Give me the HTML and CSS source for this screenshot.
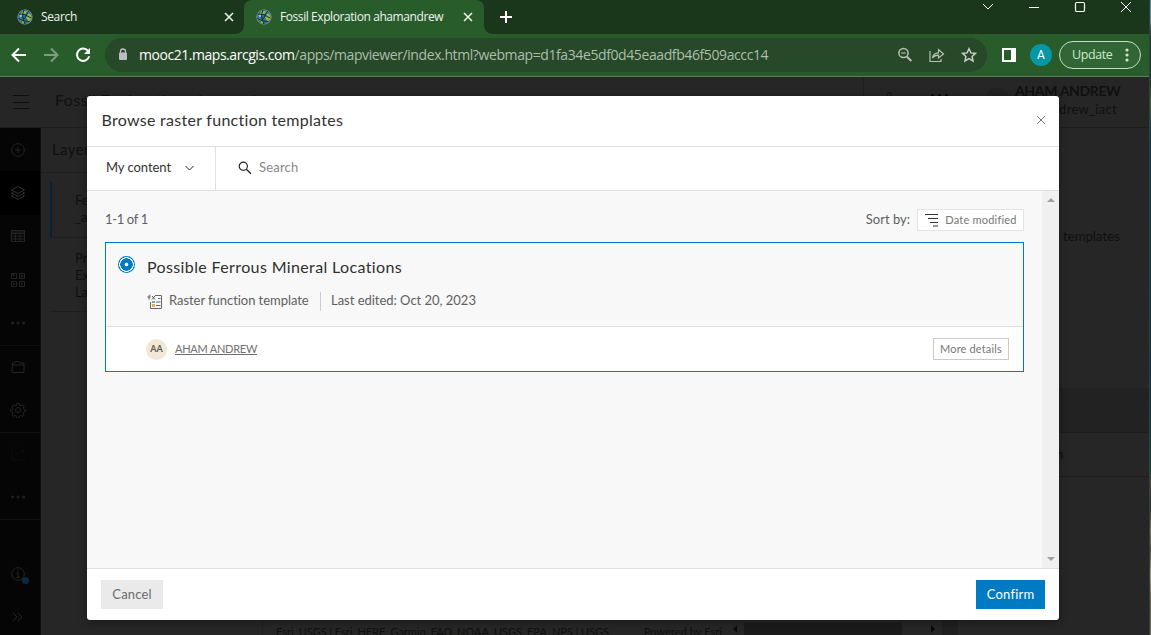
FILE: index.html
```html
<!DOCTYPE html>
<html lang="en">
<head>
<meta charset="utf-8">
<title>Fossil Exploration ahamandrew</title>
<link rel="stylesheet" href="styles.css">
</head>
<body>
<svg class="defs" width="0" height="0">
  <symbol id="globe" viewBox="0 0 16 16">
    <circle cx="8" cy="8" r="7.600" fill="#8f9a92"/>
    <circle cx="8" cy="8" r="6.900" fill="#2a6f9f"/>
    <path d="M5 2.500l3-1 1.500 1.500-1 2L6 6.500 3 6.500zM10.500 4.500l2.500 0 1.500 3-.5 3-2.500 2.500-1.500-2.500-1-2zM3 9.500l3 .5 2 2-1 2.500-3-1.500z" fill="#93b640"/>
    <path d="M2.500 6l2-1.500.5 3-2 1zM9 2l2.500 1-1 1.200z" fill="#8cc4e4"/>
    <path d="M1.500 5q6-1 12.500 4M1.500 9.500q5 3 11 3M7 1q-3 6 1 14M11.500 2q-2 7-8 11" fill="none" stroke="#10232c" stroke-width=".9"/>
  </symbol>
  <symbol id="close" viewBox="0 0 10 10"><path d="M1 1l8 8M9 1L1 9" fill="none" stroke="currentColor"/></symbol>
</svg>
<div class="screen">
  <div class="window">
    <div class="tabs">
      <div class="tab first"><svg class="fav"><use href="#globe"/></svg><span class="t-search">Search</span><svg class="tabclose"><use href="#close"/></svg></div>
      <div class="tab active"><svg class="fav"><use href="#globe"/></svg><span class="t-active">Fossil Exploration ahamandrew</span><svg class="tabclose"><use href="#close"/></svg></div>
      <svg class="plus" width="12" height="12"><path d="M6 0v12M0 6h12" stroke="#fff" stroke-width="2"/></svg>
      <div class="winctl">
        <svg width="12" height="8"><path d="M1 1l5 5 5-5" fill="none" stroke="#fff"/></svg>
        <svg width="12" height="12"><path d="M1 6.500h10" stroke="#fff"/></svg>
        <svg width="12" height="12"><rect x="1.500" y="1.500" width="9" height="9" rx="1.300" fill="none" stroke="#fff" stroke-width="1.200"/></svg>
        <svg width="12" height="12"><path d="M1 1l10 10M11 1L1 11" stroke="#fff"/></svg>
      </div>
    </div>
    <div class="toolbar">
      <svg class="nav" width="16" height="16"><path d="M15 8H2M8 1.500L1.500 8 8 14.500" fill="none" stroke="#fff" stroke-width="2"/></svg>
      <svg class="nav" width="16" height="16"><path d="M1 8h13M8 1.500L14.500 8 8 14.500" fill="none" stroke="#7f9c80" stroke-width="2"/></svg>
      <svg class="nav" width="16" height="16"><path d="M13.300 4.200A6.200 6.200 0 1 0 14.200 9.300" fill="none" stroke="#fff" stroke-width="2"/><path d="M15 1v6H9z" fill="#fff"/></svg>
      <div class="address">
        <svg width="10" height="13"><path d="M2.500 5V3.500a2.500 2.500 0 0 1 5 0V5" fill="none" stroke="#b9bfc0" stroke-width="1.300"/><rect x="1" y="4.500" width="8" height="7.500" rx="1" fill="#b9bfc0"/></svg>
        <span class="url"><b>mooc21.maps.arcgis.com</b>/apps/mapviewer/index.html?webmap=d1fa34e5df0d45eaadfb46f509accc14</span>
        <svg class="a1" width="16" height="16"><g fill="none" stroke="#b7c2b7"><circle cx="6.500" cy="6" r="4.600" stroke-width="1.500"/><path d="M10 9.700l4.300 4.300" stroke-width="2"/><path d="M4.300 6h4.400" stroke-width="1.200"/></g></svg>
        <svg class="a2" width="16" height="16"><path d="M1 4v10.500h11V12M3.500 11C4 7.500 6 6 9.500 5.800V2.500L14.500 7 9.500 11V8.200C6.800 8.200 5 9 3.500 11z" fill="none" stroke="#b7c2b7" stroke-width="1.200"/></svg>
        <svg class="a3" width="16" height="16"><path d="M8 1.700l1.900 4.200 4.600.5-3.400 3.100.9 4.500L8 11.700 4 14l.9-4.500L1.500 6.400l4.600-.5z" fill="none" stroke="#c5cec5" stroke-width="1.500"/></svg>
      </div>
      <svg class="side" width="14" height="14"><path fill="#fff" fill-rule="evenodd" d="M0 0h14v14H0zM2 2v10h7V2z"/></svg>
      <span class="profile">A</span>
      <div class="update"><span>Update</span><svg width="4" height="14"><g fill="#c8ecc9"><circle cx="2" cy="2" r="1.600"/><circle cx="2" cy="7" r="1.600"/><circle cx="2" cy="12" r="1.600"/></g></svg></div>
    </div>
    <div class="app">
      <header class="apphead">
        <svg class="burger" width="18" height="16"><path d="M1 1.500h16M1 8.500h16M1 14.500h16" stroke="#0d0d0d"/></svg>
        <span class="maptitle">Fossil Exploration ahamandrew</span>
        <div class="account">
          <svg class="bell" width="8" height="10"><path d="M2 4V2.500a2 2 0 0 1 4 0V4" fill="none" stroke="#111"/></svg>
          <i class="grid"></i>
          <i class="avatar"></i>
          <div class="names"><b>AHAM ANDREW</b><span>ahamandrew_iact</span></div>
        </div>
      </header>
      <div class="workspace">
        <nav class="rail">
          <a><svg><circle cx="8" cy="8" r="6.300"/><path d="M8 5v6M5 8h6"/></svg></a>
          <a class="on"><svg><path d="M1.500 5L8 1.500 14.500 5 8 8.500zM3 7.200L1.500 8 8 11.500 14.500 8 13 7.200M3 10l-1.500.9L8 14.500l6.500-3.600L13 10"/></svg></a>
          <a><svg><path d="M1.500 2.500h13v11h-13zM1.500 5.500h13M1.500 8.200h13M1.500 11h13M5.500 5.500v8M10 5.500v8M1.500 4h13"/></svg></a>
          <a><svg><path d="M1.500 1.500h5v5h-5zM9.500 1.500h5v5h-5zM1.500 9.500h5v5h-5zM9.500 9.500h5v5h-5zM3 1.500v2h2M11 6V3.500h2V5M3 11.500h2l-2 2M11 11.500h2M11 13h1"/></svg></a>
          <a class="dots"><svg><circle cx="2.500" cy="8" r="1"/><circle cx="8" cy="8" r="1"/><circle cx="13.500" cy="8" r="1"/></svg></a>
          <a class="rule"><svg><path d="M2.500 4h2l1-1.500h3L9 4h5v9.500H2zM2 6h12"/></svg></a>
          <a><svg><circle cx="8" cy="8" r="2.500"/><path d="M6.800 1.500h2.400l.4 1.900 1.300.5 1.700-1.100 1.600 1.700-1 1.600.5 1.200 1.800.4v2l-1.900.4-.5 1.100 1 1.700-1.600 1.500-1.600-1-1.300.5-.4 1.800H6.800l-.4-1.800-1.200-.5-1.700 1-1.600-1.600 1-1.600-.5-1.100L.6 9.600v-2l1.800-.4.5-1.200-1-1.600 1.600-1.600 1.700 1 1.200-.5z"/></svg></a>
          <a class="rule faint"><svg><path d="M9 2H2v12h12V9M7 10c0-4 2-5 6-5M11 2l3 3-3 3"/></svg></a>
          <a class="dots"><svg><circle cx="2.500" cy="8" r="1"/><circle cx="8" cy="8" r="1"/><circle cx="13.500" cy="8" r="1"/></svg></a>
          <div class="railfoot rule">
            <a class="info"><svg><circle cx="8" cy="8" r="6.300"/><path d="M6.500 7H8v4.500M6.500 11.500h3M8 4v1.500"/></svg></a>
            <a class="expand"><svg><path d="M3 4l4 4-4 4M8 4l4 4-4 4"/></svg></a>
          </div>
        </nav>
        <section class="layers">
          <h2>Layers</h2>
          <div class="layer sel">Fe<br>_a</div>
          <div class="layer second">Pro<br>Ex<br>La</div>
        </section>
        <main class="map">
          <span class="credit">Esri, USGS | Esri, HERE, Garmin, FAO, NOAA, USGS, EPA, NPS | USGS</span>
          <span class="powered">Powered by Esri</span>
          <div class="hscroll"><i class="left"></i><i class="thumb"></i><i class="right"></i></div>
        </main>
        <aside class="panel">
          <div class="ptop"><span>templates</span></div>
          <div class="pband"></div>
          <div class="prow">n</div>
        </aside>
      </div>
      <div class="modal">
        <header class="mhead"><h1><span>Browse raster function templates</span></h1><svg width="10" height="10"><use href="#close"/></svg></header>
        <div class="filter">
          <div class="scope"><span>My content</span><svg width="9" height="6"><path d="M.5 1l4 4 4-4" fill="none" stroke="#222"/></svg></div>
          <div class="search"><svg width="14" height="14"><circle cx="5.300" cy="5.300" r="4.100" fill="none" stroke="#222" stroke-width="1.200"/><path d="M8.300 8.300l4.700 4.500" stroke="#222" stroke-width="1.300"/></svg><span>Search</span></div>
        </div>
        <div class="mbody">
          <div class="results">
            <div class="bar"><span class="count">1-1 of 1</span><span class="sortby">Sort by:</span>
              <button class="sort"><svg width="14" height="14"><path d="M1 1.500h13M4 5.500h10M6 9.500h8M9 13h5" stroke="#333" stroke-width="1.100"/></svg><span>Date modified</span></button>
            </div>
            <article class="card">
              <div class="ctop">
                <i class="radio"></i>
                <div class="info-col">
                  <h3><span>Possible Ferrous Mineral Locations</span></h3>
                  <div class="meta"><svg width="16" height="16"><path d="M8 1.500h6.500v13h-11V8M11 4.500h2.500M9 8h4.500M9 11.500h4.500M6 12h2" fill="none" stroke="#666"/><path d="M3.500 1C2 .5 2 2 2 5.500M.5 3h3M5 2l3 3.500M8 2L5 5.500" fill="none" stroke="#555"/><path d="M5 7h3v2H5z" fill="#6bb77b"/><path d="M5 10h3v3H5z" fill="#efaa62"/></svg><span class="kind">Raster function template</span><span class="edited">Last edited: Oct 20, 2023</span></div>
                </div>
              </div>
              <footer><i class="initials">AA</i><a class="owner">AHAM ANDREW</a><button class="more"><span>More details</span></button></footer>
            </article>
          </div>
          <div class="vscroll"><i class="up"></i><i class="down"></i></div>
        </div>
        <footer class="mfoot"><button class="cancel">Cancel</button><button class="confirm">Confirm</button></footer>
      </div>
    </div>
  </div>
  <div class="desktop"></div>
</div>
</body>
</html>
```
FILE: styles.css
```css
* { box-sizing: border-box; }
body { margin: 0; font-family: Lato, sans-serif; overflow: hidden; }
h1, h2, h3 { margin: 0; font-weight: 400; }
button { font-family: inherit; padding: 0 0 2px; border: 0; display: flex; align-items: center; justify-content: center; white-space: nowrap; }
svg { display: block; flex: none; }
i { font-style: normal; }
.defs { position: absolute; }
.screen { display: flex; width: 1151px; height: 635px; overflow: hidden; }
.window { width: 1149px; display: flex; flex-direction: column; }
.desktop { width: 2px; background: linear-gradient(#5d8099 0, #668a9b 20px, #263b38 32px, #1d3328 85px, #45613c 100px, #073344 140px, #0a3932 240px, #082b3b 370px, #13432d 474px, #4b4439 475px, #35322d 510px, #807468 530px, #4e483f 550px, #a9a293 575px, #6a5d47 600px, #736e65 635px); border-left: 1px solid #2b4247; }

.tabs { height: 34px; background: #1b371b; display: flex; align-items: center; color: #f0f4f0; font: 12px "Open Sans", sans-serif; }
.tab { height: 34px; display: flex; align-items: center; white-space: nowrap; position: relative; }
.tab span { padding-bottom: 1px; }
.first { width: 244px; padding: 0 10px 0 17px; }
.active { width: 240px; padding: 0 11px 0 12px; background: #285d2b; border-radius: 8px 8px 0 0; }
.active::before, .active::after { content: ""; position: absolute; bottom: 0; width: 8px; height: 8px; }
.active::before { left: -8px; background: radial-gradient(circle at 0 0, transparent 7.5px, #285d2b 8px); }
.active::after { right: -8px; background: radial-gradient(circle at 100% 0, transparent 7.5px, #285d2b 8px); }
.fav { width: 16px; height: 16px; margin-right: 8px; }
.tabclose { width: 10px; height: 10px; margin-left: auto; stroke-width: 1.5; }
.t-search { letter-spacing: -.35px; }
.t-active { letter-spacing: -.42px; }
.plus { margin-left: 16px; }
.winctl { margin: 0 17px 21px auto; display: flex; align-items: center; gap: 34px; }

.toolbar { height: 43px; padding-bottom: 1px; background: #285d2b; border-bottom: 1px solid #528156; display: flex; align-items: center; }
.nav { margin-left: 11px; }
.nav + .nav { margin-left: 16px; }
.address { width: 882px; height: 34px; margin-left: 14px; padding-left: 13px; border-radius: 17px; background: #274829; display: flex; align-items: center; }
.url { width: 769px; padding-left: 11px; font: 14px "Open Sans", sans-serif; letter-spacing: -.4px; color: #abbfac; white-space: nowrap; }
.url b { font-weight: 400; letter-spacing: -.46px; color: #fff; }
.a2, .a3 { margin-left: 16px; }
.side { margin-left: 15px; }
.profile { width: 22px; height: 22px; margin-left: 14px; border-radius: 50%; background: #0797a7; color: #fff; font: 12px/22px Roboto, sans-serif; text-align: center; }
.update { width: 82px; height: 28px; margin-left: 7px; padding: 0 11px 0 12px; border: 1px solid #c4e0c4; border-radius: 14px; background: #336637; color: #c8ecc9; display: flex; align-items: center; justify-content: space-between; font: 12.500px "Open Sans", sans-serif; letter-spacing: -.4px; }

.app { height: 558px; background: #262626; position: relative; display: flex; flex-direction: column; color: #101010; }
.apphead { height: 51px; border-bottom: 1px solid #1e1e1e; display: flex; padding-left: 12px; }
.burger { margin: 17px 25px 0 0; }
.maptitle { padding-top: 13px; font-size: 16px; letter-spacing: .4px; }
.account { width: 286px; margin-left: auto; border-left: 1px solid #202020; display: flex; }
.bell { margin: 15px 0 0 21px; }
.grid { width: 18px; height: 3px; margin: 17px 0 0 38px; background: repeating-linear-gradient(90deg, #0b0b0b 0 3px, transparent 3px 7px); }
.avatar { width: 26px; height: 26px; margin: 11px 0 0 35px; background: #222; border-radius: 50%; }
.names { width: 121px; margin: 5px 0 0 5px; display: flex; flex-direction: column; font-size: 13px; line-height: 19px; }
.names b { font-size: 14px; line-height: 18px; letter-spacing: -.35px; }
.names span { width: 102px; direction: rtl; letter-spacing: .3px; }
.workspace { height: 507px; display: flex; }
.rail { width: 41px; background: #050505; border-right: 1px solid #111; display: flex; flex-direction: column; }
.rail a { height: 43.400px; display: flex; align-items: center; padding-left: 10px; position: relative; }
.rail svg { width: 16px; height: 16px; fill: none; stroke: #242424; }
.rail .on { background: #000; }
.rail .on svg { stroke: #333; }
.rail .faint svg { stroke: #0d0d0d; }
.rail .dots svg { fill: #222; }
.rule { border-top: 1px solid #0e0e0e; }
.railfoot { flex: 1; display: flex; flex-direction: column; justify-content: flex-end; }
.rail .info { height: 48px; }
.rail .expand { height: 37px; }
.info::after { content: ""; position: absolute; left: 22px; top: 27px; width: 7px; height: 7px; border-radius: 50%; background: #062c43; }
.layers { width: 222px; border-right: 1px solid #202020; }
.layers h2 { height: 45px; padding: 12px 11px; border-bottom: 1px solid #1f1f1f; font-size: 15px; letter-spacing: .4px; }
.layer { margin-left: 9px; padding-left: 25px; font-size: 13px; line-height: 17px; border-bottom: 1px solid #1e1e1e; }
.sel { margin-top: 9px; height: 56px; padding-top: 10px; padding-left: 23px; border-left: 2px solid #04233a; }
.second { height: 73px; margin-top: 1px; padding-top: 11px; }
.map { width: 695px; display: flex; align-items: flex-end; color: #101010; font-size: 11px; white-space: nowrap; border-right: 16px solid #202020; }
.credit { width: 368px; padding-left: 13px; line-height: 13px; margin-bottom: -3px; letter-spacing: -.05px; }
.powered { width: 100px; padding-left: 13px; line-height: 13px; margin-bottom: -3px; letter-spacing: .05px; }
.hscroll { width: 211px; height: 12px; display: flex; align-items: center; }
.hscroll .left { margin-left: 2px; border: 4px solid transparent; border-right-color: #0d0d0d; border-left: 0; }
.hscroll .thumb { width: 158px; height: 12px; margin-left: 7px; background: #1b1b1b; }
.hscroll .right { margin-left: 29px; border: 4px solid transparent; border-left: 4px solid #080808; border-right: 0; }
.panel { flex: 1; font-size: 13px; }
.ptop { height: 260px; padding: 100px 0 0 105px; letter-spacing: .1px; }
.pband { height: 45px; background: #222; border-bottom: 1px solid #1e1e1e; }
.prow { height: 44px; padding: 13px 0 0 98px; border-bottom: 1px solid #1e1e1e; }

.modal { position: absolute; left: 87px; top: 19px; width: 972px; height: 524px; background: #fff; border-radius: 3px; overflow: hidden; color: #333; display: flex; flex-direction: column; box-shadow: 0 2px 8px rgba(0, 0, 0, .35); }
.mhead { height: 51px; padding: 0 13px 2px 14.500px; border-bottom: 1px solid #dfdfdf; display: flex; justify-content: space-between; align-items: center; color: #777; }
.mhead h1 { font-size: 16px; color: #323232; letter-spacing: .28px; margin-bottom: 2px; }
.filter { height: 44px; display: flex; border-bottom: 1px solid #dfdfdf; font-size: 13px; }
.filter span { padding-bottom: 2px; }
.scope { width: 129px; padding: 0 21px 1px 19px; border-right: 1px solid #dfdfdf; display: flex; align-items: center; justify-content: space-between; letter-spacing: -.05px; }
.search { padding: 0 0 1px 22px; display: flex; align-items: center; gap: 7px; color: #888; letter-spacing: .2px; }
.mbody { height: 377px; display: flex; background: #f8f8f8; }
.results { width: 955px; padding: 18px 18px 0; }
.bar { height: 22px; display: flex; align-items: center; font-size: 13px; color: #606060; }
.bar span { padding-bottom: 2px; }
.count { letter-spacing: -.35px; }
.sortby { margin-left: auto; letter-spacing: 0; }
.sort { width: 107px; height: 22px; margin-left: 7px; padding: 0; border: 1px solid #e3e3e3; background: #fff; color: #777; font-size: 11px; gap: 7px; letter-spacing: .2px; }
.card { height: 130px; margin-top: 11px; border: 1px solid #007ac2; background: #fff; }
.ctop { height: 84px; padding: 13px 0 0 12px; background: #f8f8f8; border-bottom: 1px solid #dfdfdf; display: flex; }
.radio { width: 17px; height: 17px; border-radius: 50%; background: radial-gradient(circle, #fff 0 1.500px, #007ac2 2.200px 6px, #fff 6.400px 7.100px, #007ac2 7.500px); }
.info-col { padding-left: 12px; }
h3 { height: 24px; font-size: 16px; line-height: 22px; color: #303030; letter-spacing: .37px; }
.meta { height: 19px; margin-top: 12px; display: flex; align-items: center; font-size: 13px; line-height: 17px; color: #606060; }
.kind { width: 152px; height: 19px; margin-left: 6px; border-right: 1px solid #ccc; letter-spacing: -.05px; }
.edited { height: 19px; padding-left: 10px; letter-spacing: -.02px; }
.card footer { height: 44px; padding: 0 14px 0 40px; display: flex; align-items: center; }
.initials { width: 21px; height: 21px; border-radius: 50%; background: #f3e7d6; font-size: 9px; line-height: 20px; font-weight: 700; text-align: center; color: #5b5751; }
.owner { margin-left: 8px; padding-bottom: 2px; font-size: 11px; letter-spacing: -.25px; color: #707070; text-decoration: underline; }
.more { width: 76px; height: 22px; margin-left: auto; border: 1px solid #cacaca; background: #fff; color: #777; font-size: 11px; letter-spacing: .15px; }
.vscroll { width: 17px; background: #f0f0f0; display: flex; flex-direction: column; align-items: center; justify-content: space-between; padding: 7px 0; }
.up, .down { border: 4px solid transparent; }
.up { border-bottom-color: #a0a0a0; border-top: 0; }
.down { border-top-color: #a0a0a0; border-bottom: 0; }
.mfoot { height: 52px; padding: 0 14px; border-top: 1px solid #dfdfdf; display: flex; align-items: center; justify-content: space-between; }
.cancel { width: 62px; height: 29px; background: #eaeaea; color: #6a6a6a; font-size: 13px; letter-spacing: .15px; }
.confirm { width: 69px; height: 29px; background: #007ac2; color: #fff; font-size: 13px; letter-spacing: .2px; }
```
